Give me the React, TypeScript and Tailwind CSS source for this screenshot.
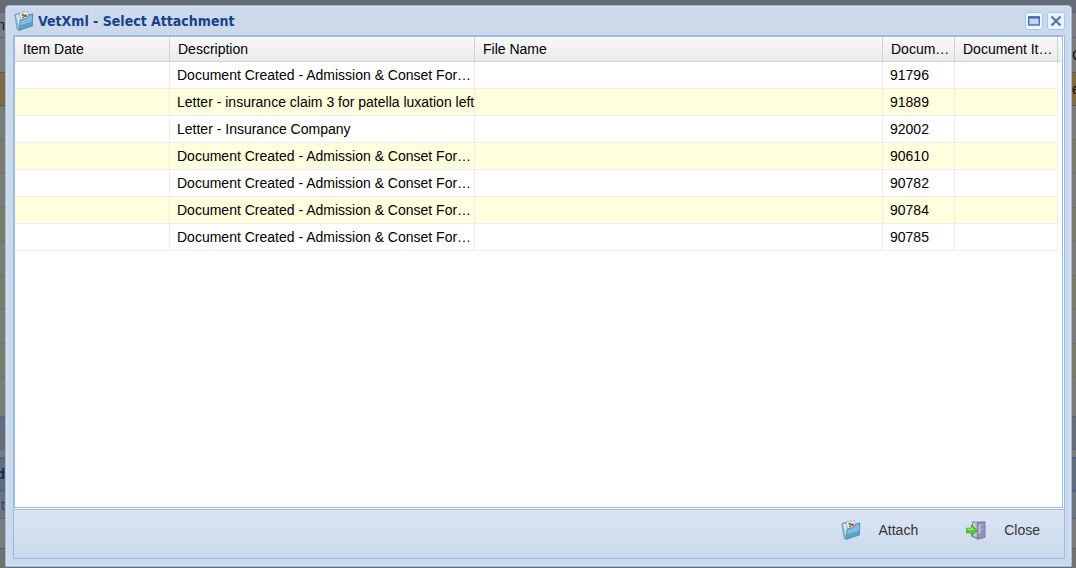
type Attachment = {
  id: string;
  description: string;
};

const attachments: Attachment[] = [
  { id: "91796", description: "Document Created - Admission & Conset For…" },
  { id: "91889", description: "Letter - insurance claim 3 for patella luxation left" },
  { id: "92002", description: "Letter - Insurance Company" },
  { id: "90610", description: "Document Created - Admission & Conset For…" },
  { id: "90782", description: "Document Created - Admission & Conset For…" },
  { id: "90784", description: "Document Created - Admission & Conset For…" },
  { id: "90785", description: "Document Created - Admission & Conset For…" },
];

function FolderIcon({ className }: { className?: string }) {
  return (
    <svg viewBox="0 0 20 20" className={className} aria-hidden="true">
      <path d="M.8 3.6 5 2.2 8 5v12l-3.2 2.6-1.6-1.2z" fill="#8dbdd8" stroke="#6c94b0" strokeWidth=".8" />
      <path d="M2 4.6 5.4 3.6 6.6 8 5 15.5z" fill="#d3e6f0" />
      <path d="M5.2 1.8 13.6.6 15 8.5l-8 3z" fill="#f5f9fb" stroke="#8fabbd" strokeWidth=".8" />
      <circle cx="8.8" cy="4" r="1.4" fill="#43a355" />
      <circle cx="11.4" cy="4.8" r="1.6" fill="#d63a31" />
      <circle cx="9" cy="6.6" r="1.1" fill="#4a7cc4" />
      <path d="M6.2 9 12.8 7.2 14.6 4 18.8 2.8 18.4 15 5 19.4z" fill="#5d9fcb" stroke="#4d86ae" strokeWidth=".8" />
      <path d="M6.8 9.8 13.4 7.8 15.2 4.8 18 4l-.2 6.5L6 14.6z" fill="#93c5e3" opacity=".75" />
    </svg>
  );
}

function ExitIcon({ className }: { className?: string }) {
  return (
    <svg viewBox="0 0 20 20" className={className} aria-hidden="true">
      <path d="M6 1.6h13.2v16.2L12 19.4 6 17z" fill="#8985a8" />
      <path d="M7 2.6h4.6v14.6L7 16z" fill="#bfcad2" />
      <path d="M11 3 19 1.8v15.4l-7.6 2z" fill="#938fbc" stroke="#77729c" strokeWidth=".7" />
      <path d="M13.6 4.6v9" stroke="#c9c8e0" strokeWidth="1.6" />
      <path d="M14.4 5h3M14.4 9.4h2.4" stroke="#b9b7d6" strokeWidth="1.2" />
      <path d="M.4 8.2h5V5l6 5.6-6 5.6v-3.4h-5z" fill="#58c835" stroke="#43992c" strokeWidth=".8" />
      <path d="M1.4 9.4h4.8V7.6" stroke="#a8ea88" strokeWidth="1.2" fill="none" />
    </svg>
  );
}

// Dimmed page behind the dialog, visible only as a sliver on each side
function Backdrop({ side }: { side: "left" | "right" }) {
  const left = side === "left";
  return (
    <div
      aria-hidden="true"
      className={`flex shrink-0 flex-col overflow-hidden bg-[#7b7b7b] text-sm leading-6 text-[#111111] *:flex *:shrink-0 *:items-center ${
        left ? "w-[5px] *:justify-end" : "w-1"
      }`}
    >
      <div className="h-3 bg-[#646b75]" />
      <div className="h-[26px] border-y border-[#566a86] bg-[#7a7c7f]">{left && "m"}</div>
      <div className="h-[34px]">{!left && "C"}</div>
      <div className="h-[34px] border-y border-dotted border-[#3f4e63] bg-[#7f6a42]">{!left && "e"}</div>
      <div className="h-[34px] border-b border-[#6f6f6f]" />
      <div className="h-[34px] border-b border-[#6f6f6f] bg-[#7a7a68]" />
      <div className="h-[34px] border-b border-[#6f6f6f]" />
      <div className="h-[34px] border-b border-[#6f6f6f] bg-[#7a7a68]" />
      <div className="h-[34px] border-b border-[#6f6f6f]" />
      <div className="h-[34px] border-b border-[#6f6f6f] bg-[#7a7a68]" />
      <div className="h-[34px] border-b border-[#6f6f6f]" />
      <div className="h-[34px] border-b border-[#6f6f6f] bg-[#7a7a68]" />
      <div className="h-[38px]" />
      <div className="h-[34px] border-y border-[#4c658b] bg-[#666d78]" />
      <div className="h-[7px]" />
      <div className="h-[34px] border-y-2 border-[#4c658b] bg-[#626d7c] font-bold text-[#0d2a57]">{left && "d"}</div>
      <div className="h-7 border-y border-[#4c658b] bg-[#6d747e] text-[#263f6b]">{left && "t"}</div>
      <div className="h-[30px] border-b border-[#5f5f5f]" />
      <div className="grow bg-[#717171]" />
    </div>
  );
}

function TitleBar() {
  return (
    <header className="flex h-[29px] items-center gap-1 pr-[6px] pl-2">
      <FolderIcon className="size-5 shrink-0" />
      <h1 className="grow truncate font-['DejaVu_Sans_Condensed','DejaVu_Sans',sans-serif] text-sm font-bold text-[#15428b]">
        VetXml - Select Attachment
      </h1>
      <div className="flex gap-1">
        <button
          type="button"
          aria-label="Maximize"
          className="flex size-[18px] items-center justify-center rounded-[3px] border border-[#a5c4ee] bg-[#eef4fd]"
        >
          <svg viewBox="0 0 12 10" className="h-2.5 w-3">
            <rect x=".75" y="1" width="10.5" height="8" fill="#c3d6f2" stroke="#4263b0" strokeWidth="1.3" />
            <path d="M0 1.5h12" stroke="#4263b0" strokeWidth="2" />
          </svg>
        </button>
        <button
          type="button"
          aria-label="Close window"
          className="flex size-[18px] items-center justify-center rounded-[3px] border border-[#a5c4ee] bg-[#eef4fd]"
        >
          <svg viewBox="0 0 12 12" className="size-3">
            <path d="M1.5 1.5l9 9M10.5 1.5l-9 9" stroke="#c3d5f0" strokeWidth="3.6" />
            <path d="M1.5 1.5l9 9M10.5 1.5l-9 9" stroke="#4a64ac" strokeWidth="1.7" />
          </svg>
        </button>
      </div>
    </header>
  );
}

function AttachmentTable() {
  const th = "whitespace-nowrap border-r border-b border-[#d0d0d0] pl-2 text-left font-normal";
  const td = "whitespace-nowrap border-r border-b border-[#ededed] pl-[7px]";

  return (
    <table className="w-full table-fixed border-separate border-spacing-0 text-sm text-black">
      <colgroup>
        <col className="w-[155px]" />
        <col className="w-[305px]" />
        <col />
        <col className="w-[72px]" />
        <col className="w-[103px]" />
        <col className="w-[3px]" />
      </colgroup>
      <thead>
        <tr className="h-[25px] bg-linear-to-b from-[#f9f9f9] to-[#e9eaeb]">
          <th className={th}>Item Date</th>
          <th className={th}>Description</th>
          <th className={th}>File Name</th>
          <th className={th}>Docum…</th>
          <th className={th}>Document It…</th>
          <td className="border-b border-[#d0d0d0]" />
        </tr>
      </thead>
      <tbody>
        {attachments.map((item) => (
          <tr key={item.id} className="h-[27px] even:bg-[#ffffdd]">
            <td className={td} />
            <td className={td}>{item.description}</td>
            <td className={td} />
            <td className={td}>{item.id}</td>
            <td className={td} />
            <td className="bg-white" />
          </tr>
        ))}
      </tbody>
    </table>
  );
}

export default function App() {
  return (
    <div className="flex h-screen overflow-hidden bg-[#646b75] font-['Liberation_Sans',Arial,sans-serif]">
      <Backdrop side="left" />
      <div className="flex min-w-0 grow flex-col pt-[5px] pb-px">
        <div
          role="dialog"
          aria-label="VetXml - Select Attachment"
          className="flex min-h-0 grow flex-col rounded-t-[4px] border border-[#9bb8dd] bg-[#ccd9ea] shadow-[inset_0_0_0_1px_#d9e4f2]"
        >
          <TitleBar />
          <div className="mr-[6px] mb-[7px] ml-[7px] flex min-h-0 grow flex-col border border-[#99bbe8] bg-white">
            <div className="mr-px mb-px min-h-0 grow overflow-hidden border border-[#99bbe8] pr-px">
              <AttachmentTable />
            </div>
            <footer className="flex h-[49px] shrink-0 items-start justify-end gap-12 border-t border-[#99bbe8] bg-linear-to-b from-[#dbe6f4] to-[#c9d9ec] pt-[10px] pr-6 text-sm text-[#333333]">
              <button type="button" className="flex items-center gap-[18px]">
                <FolderIcon className="size-5" />
                Attach
              </button>
              <button type="button" className="flex items-center gap-[18px]">
                <ExitIcon className="size-5" />
                Close
              </button>
            </footer>
          </div>
        </div>
      </div>
      <Backdrop side="right" />
    </div>
  );
}
